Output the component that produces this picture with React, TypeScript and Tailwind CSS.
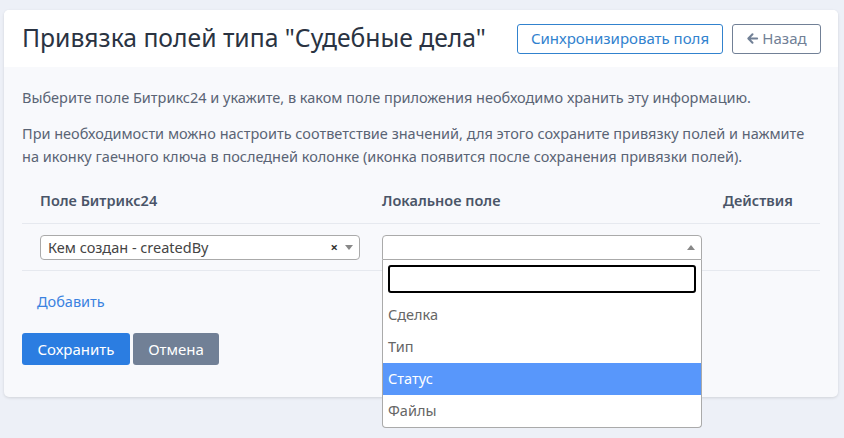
import React from "react";

export default function App() {
  const font = { fontFamily: '"Noto Sans", "Open Sans", sans-serif' };
  return (
    <div className="w-[844px] h-[438px] bg-[#edf0f7] pt-[10px] pl-[4px] overflow-hidden" style={font}>
      <div className="w-[834px] rounded-[5px] bg-[#f8f9fc] shadow-[0_1px_3px_rgba(0,0,0,0.12)]">
        {/* Header */}
        <div className="h-[57px] bg-white rounded-t-[5px] flex items-center justify-between pl-[18px] pr-[17px]">
          <h1 className="text-[24.7px] text-[#2a3342] leading-none">
            Привязка полей типа "Судебные дела"
          </h1>
          <div className="flex items-center gap-[9px]">
            <button className="h-[30px] w-[206px] border border-[#3182ce] rounded-[3px] text-[15px] text-[#3182ce] bg-white">
              Синхронизировать поля
            </button>
            <button className="h-[30px] w-[89px] border border-[#718096] rounded-[3px] text-[15px] text-[#718096] bg-white flex items-center justify-center gap-[3px]">
              <svg width="13" height="13" viewBox="0 0 14 14" fill="none">
                <path d="M12 7H3M7 2.5L2.5 7L7 11.5" stroke="#718096" strokeWidth="2.2" strokeLinecap="round" strokeLinejoin="round" />
              </svg>
              Назад
            </button>
          </div>
        </div>
        {/* Body */}
        <div className="px-[18px] pt-[19px] pb-[32px] relative">
          <p className="text-[14.5px] leading-[23px] text-[#5a6475] mb-[13px]">
            Выберите поле Битрикс24 и укажите, в каком поле приложения необходимо хранить эту информацию.
          </p>
          <p className="text-[14.5px] leading-[23px] text-[#5a6475]">
            При необходимости можно настроить соответствие значений, для этого сохраните привязку полей и нажмите на иконку гаечного ключа в последней колонке (иконка появится после сохранения привязки полей).
          </p>

          <div className="mt-[10px] w-[798px]">
            <div className="grid grid-cols-[342px_341px_115px] h-[46px] items-center border-b border-[#e6e9ef] text-[14.5px] font-semibold text-[#4a5568]">
              <div className="pl-[18px]">Поле Битрикс24</div>
              <div className="pl-[18px]">Локальное поле</div>
              <div className="pl-[18px]">Действия</div>
            </div>
            <div className="grid grid-cols-[342px_341px_115px] h-[47px] items-start pt-[11px] border-b border-[#e6e9ef]">
              <div className="pl-[18px]">
                <div className="w-[320px] h-[25px] border border-[#aaaaaa] rounded-[4px] bg-white flex items-center pl-[7px] pr-[6px]">
                  <span className="text-[14.5px] text-[#444] flex-1">Кем создан - createdBy</span>
                  <span className="text-[13px] font-bold text-[#333] leading-none mr-[7px]">×</span>
                  <svg width="8" height="5" viewBox="0 0 8 5"><path d="M0 0H8L4 5Z" fill="#888" /></svg>
                </div>
              </div>
              <div className="pl-[18px] relative">
                <div className="w-[320px] h-[25px] border border-[#aaaaaa] rounded-t-[4px] bg-white flex items-center justify-end pr-[6px]">
                  <svg width="8" height="5" viewBox="0 0 8 5"><path d="M0 5H8L4 0Z" fill="#888" /></svg>
                </div>
                {/* Dropdown */}
                <div className="absolute left-[18px] top-[25px] w-[320px] h-[168px] bg-white border border-t-0 border-[#aaaaaa] rounded-b-[4px] z-10">
                  <div className="pt-[5px] px-[5px] pb-[6px]">
                    <div className="h-[28px] border-2 border-black rounded-[3px]" />
                  </div>
                  <div className="text-[14.5px]">
                    <div className="h-[32px] flex items-center px-[5px] text-[#666]">Сделка</div>
                    <div className="h-[32px] flex items-center px-[5px] text-[#666]">Тип</div>
                    <div className="h-[32px] flex items-center px-[5px] text-white bg-[#5897fb]">Статус</div>
                    <div className="h-[32px] flex items-center px-[5px] text-[#666]">Файлы</div>
                  </div>
                </div>
              </div>
              <div />
            </div>
          </div>

          <div className="h-[62px] flex items-center pl-[15px]">
            <a className="text-[14.5px] text-[#3b82e0]">Добавить</a>
          </div>

          <div className="flex gap-[3px]">
            <button className="h-[32px] w-[108px] rounded-[3px] bg-[#2b7de1] text-white text-[15px]">Сохранить</button>
            <button className="h-[32px] w-[86px] rounded-[3px] bg-[#718096] text-white text-[15px]">Отмена</button>
          </div>
        </div>
      </div>
    </div>
  );
}
